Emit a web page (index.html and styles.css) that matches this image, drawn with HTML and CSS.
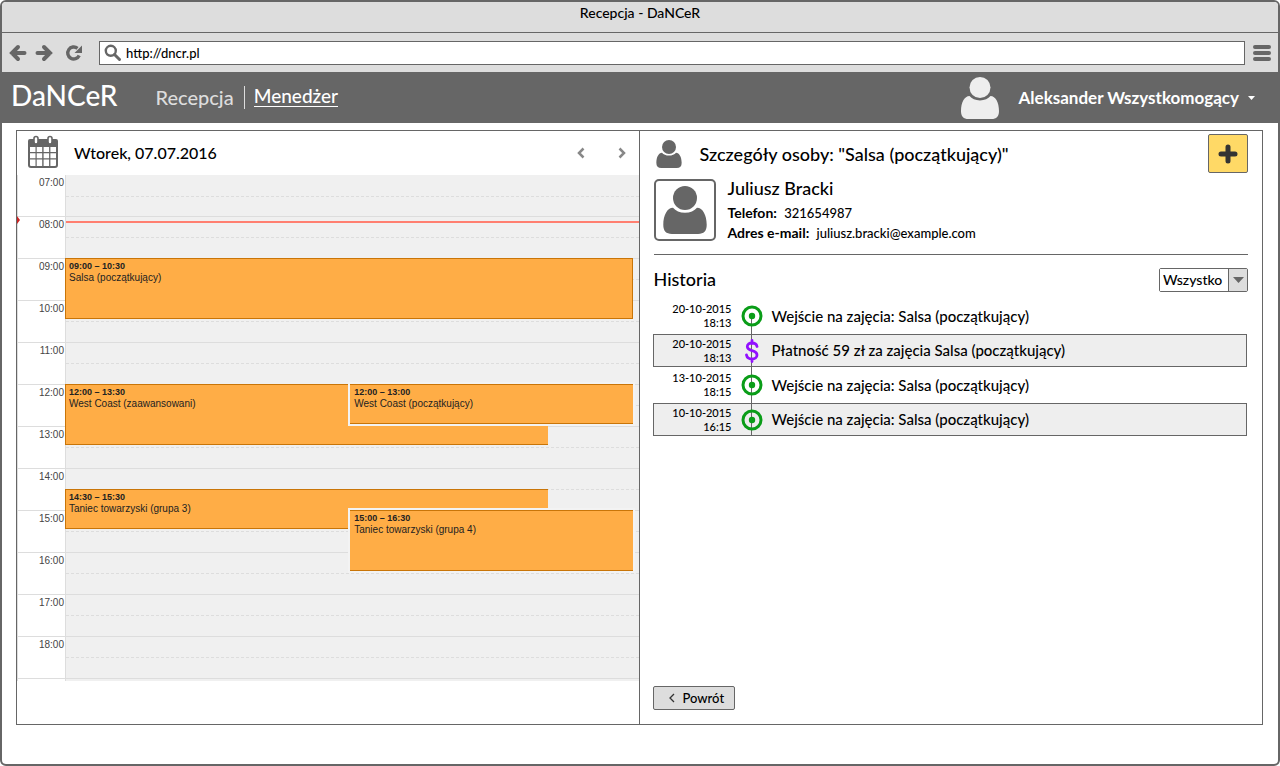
FILE: index.html
```html
<!DOCTYPE html>
<html lang="pl">
<head>
<meta charset="utf-8">
<meta name="viewport" content="width=device-width, initial-scale=1">
<title>Recepcja - DaNCeR</title>
<link rel="stylesheet" href="styles.css">
</head>
<body>
<svg width="0" height="0" class="sprite" aria-hidden="true">
  <symbol id="person" viewBox="0 0 38 42">
    <circle cx="19" cy="10.500" r="10.500"/>
    <path d="M8.500 19c2.200 2.600 6 4.400 10.500 4.400S27.300 21.600 29.500 19c5 0 8.500 6.500 8.500 15 0 5.500-2.500 8-7.500 8h-23C2.500 42 0 39.500 0 34c0-8.500 3.500-15 8.500-15z"/>
  </symbol>
  <symbol id="target" viewBox="0 0 22 22">
    <circle cx="11" cy="11" r="9" fill="none" stroke="currentColor" stroke-width="3"/>
    <circle cx="11" cy="11" r="3.200"/>
  </symbol>
  <symbol id="dollar" viewBox="0 0 14 24">
    <path d="M12 7.500C11.500 5 9.700 4 7 4 4.300 4 2.300 5.300 2.300 7.600c0 5.400 9.700 2.600 9.700 8.400 0 2.500-2.200 4-5 4-3 0-5-1.300-5.500-4M7 1.500v3M7 20v2.500" fill="none" stroke="currentColor" stroke-width="2.800" stroke-linecap="round"/>
  </symbol>
</svg>
<div class="window">
  <div class="titlebar">Recepcja - DaNCeR</div>
  <div class="toolbar">
    <button class="tool" aria-label="Wstecz"><svg width="18" height="18" viewBox="0 0 18 18"><path d="M9 3L3 9l6 6M3 9h12.500" class="thick"/></svg></button>
    <button class="tool" aria-label="Dalej"><svg width="18" height="18" viewBox="0 0 18 18"><path d="M9 3l6 6-6 6M15 9H2.500" class="thick"/></svg></button>
    <button class="tool reload" aria-label="Odśwież"><svg width="18" height="18" viewBox="0 0 18 18"><path d="M14.200 11.500A6 6 0 1 1 12.500 4.300" fill="none" stroke="currentColor" stroke-width="3.400"/><path d="M17 1.500V9H9.500z"/></svg></button>
    <label class="address">
      <svg width="18" height="18" viewBox="0 0 18 18"><circle cx="6.800" cy="6.800" r="5" fill="none" stroke="currentColor" stroke-width="2.400"/><path d="M10.500 10.500l5 5" class="handle"/></svg>
      <input type="text" value="http://dncr.pl" aria-label="Adres">
    </label>
    <button class="tool" aria-label="Menu przeglądarki"><svg width="18" height="18" viewBox="0 0 18 18"><path d="M2 3h14M2 9h14M2 15h14" class="bars"/></svg></button>
  </div>
  <header class="appbar">
    <a class="brand" href="#">DaNCeR</a>
    <nav class="nav">
      <a href="#">Recepcja</a>
      <a href="#" class="active" aria-current="page"><span>Menedżer</span></a>
    </nav>
    <button class="user">
      <svg width="38" height="42"><use href="#person"/></svg>
      <span>Aleksander Wszystkomogący</span>
      <svg width="7" height="4" viewBox="0 0 7 4" class="caret"><path d="M0 0h7L3.500 4z"/></svg>
    </button>
  </header>
  <main class="content">
    <section class="calendar">
      <div class="cal-head">
        <svg class="cal-icon" width="32" height="34" viewBox="0 0 32 34">
          <path d="M3 4h26a2 2 0 0 1 2 2v24a3 3 0 0 1-3 3H4a3 3 0 0 1-3-3V6a2 2 0 0 1 2-2z"/>
          <path d="M3 12h5.500v5H3zM9.700 12h5.500v5H9.700zM16.600 12h5.500v5h-5.500zM23.400 12H29v5h-5.600zM3 18.300h5.500v5H3zM9.700 18.300h5.500v5H9.700zM16.600 18.300h5.500v5h-5.500zM23.400 18.300H29v5h-5.600zM3 24.600h5.500V31H4a1 1 0 0 1-1-1zM9.700 24.600h5.500V31H9.700zM16.600 24.600h5.500V31h-5.500zM23.400 24.600H29V30a1 1 0 0 1-1 1h-4.600z" fill="#fff"/>
          <rect x="7" y="1.500" width="4" height="7.500" rx="2" fill="#fff" stroke="#666" stroke-width="1.600"/>
          <rect x="21" y="1.500" width="4" height="7.500" rx="2" fill="#fff" stroke="#666" stroke-width="1.600"/>
        </svg>
        <h2>Wtorek, 07.07.2016</h2>
        <button class="step" aria-label="Poprzedni dzień"><svg width="10" height="12" viewBox="0 0 10 12"><path d="M7.500 1.500L3 6l4.500 4.500"/></svg></button>
        <button class="step" aria-label="Następny dzień"><svg width="10" height="12" viewBox="0 0 10 12"><path d="M2.500 1.500L7 6l-4.500 4.500"/></svg></button>
      </div>
      <div class="day">
        <div class="hour"><time>07:00</time><i></i></div>
        <div class="hour"><time>08:00</time><i></i></div>
        <div class="hour"><time>09:00</time><i></i></div>
        <div class="hour"><time>10:00</time><i></i></div>
        <div class="hour"><time>11:00</time><i></i></div>
        <div class="hour"><time>12:00</time><i></i></div>
        <div class="hour"><time>13:00</time><i></i></div>
        <div class="hour"><time>14:00</time><i></i></div>
        <div class="hour"><time>15:00</time><i></i></div>
        <div class="hour"><time>16:00</time><i></i></div>
        <div class="hour"><time>17:00</time><i></i></div>
        <div class="hour"><time>18:00</time><i></i></div>
        <div class="hour end"><time></time><i></i></div>
        <div class="now"></div>
        <div class="events">
          <article class="event full at-0900"><b>09:00 – 10:30</b><span>Salsa (początkujący)</span></article>
          <article class="event under at-1200"><b>12:00 – 13:30</b><span>West Coast (zaawansowani)</span></article>
          <article class="event over at-1200b"><b>12:00 – 13:00</b><span>West Coast (początkujący)</span></article>
          <article class="event under at-1430"><b>14:30 – 15:30</b><span>Taniec towarzyski (grupa 3)</span></article>
          <article class="event over at-1500"><b>15:00 – 16:30</b><span>Taniec towarzyski (grupa 4)</span></article>
        </div>
      </div>
    </section>
    <section class="details">
      <div class="det-head">
        <svg width="26" height="28"><use href="#person"/></svg>
        <h2>Szczegóły osoby: "Salsa (początkujący)"</h2>
        <button class="add" aria-label="Dodaj"><svg width="20" height="20" viewBox="0 0 20 20"><path d="M10 3v14M3 10h14"/></svg></button>
      </div>
      <div class="person">
        <div class="avatar"><svg width="44" height="48"><use href="#person"/></svg></div>
        <div class="facts">
          <h3>Juliusz Bracki</h3>
          <p><b>Telefon:</b> 321654987</p>
          <p><b>Adres e-mail:</b> juliusz.bracki@example.com</p>
        </div>
      </div>
      <div class="hist-head">
        <h3>Historia</h3>
        <div class="picker">
          <select aria-label="Filtr historii"><option>Wszystko</option></select>
          <span class="arrow"><svg width="11" height="6" viewBox="0 0 11 6"><path d="M0 0h11L5.500 6z"/></svg></span>
        </div>
      </div>
      <ul class="history">
        <li><time>20-10-2015<br>18:13</time><div class="mark"><svg width="22" height="22"><use href="#target"/></svg></div><p>Wejście na zajęcia: Salsa (początkujący)</p></li>
        <li class="boxed pay"><time>20-10-2015<br>18:13</time><div class="mark"><svg width="14" height="24"><use href="#dollar"/></svg></div><p>Płatność 59 zł za zajęcia Salsa (początkujący)</p></li>
        <li><time>13-10-2015<br>18:15</time><div class="mark"><svg width="22" height="22"><use href="#target"/></svg></div><p>Wejście na zajęcia: Salsa (początkujący)</p></li>
        <li class="boxed"><time>10-10-2015<br>16:15</time><div class="mark"><svg width="22" height="22"><use href="#target"/></svg></div><p>Wejście na zajęcia: Salsa (początkujący)</p></li>
      </ul>
      <button class="back"><svg width="6" height="10" viewBox="0 0 6 10"><path d="M5 1L1 5l4 4"/></svg>Powrót</button>
    </section>
  </main>
</div>
</body>
</html>
```

FILE: styles.css
```css
* { box-sizing: border-box; }
body {
  margin: 0;
  background: #fff;
  color: #000;
  font: 500 14px/20px Lato, "Open Sans", sans-serif;
}
h2, h3, p, ul { margin: 0; padding: 0; }
h2, h3 { font-weight: 500; }
svg { display: block; flex: none; fill: currentColor; }
button {
  display: flex;
  align-items: center;
  border: 0;
  padding: 0;
  background: none;
  color: inherit;
  font: inherit;
}
a { color: inherit; text-decoration: none; }
.sprite { position: absolute; }

/* Browser frame */
.window {
  display: flex;
  flex-direction: column;
  min-height: 100vh;
  border: 2px solid #666;
  border-radius: 6px;
  overflow: hidden;
}
.titlebar {
  height: 31px;
  padding-top: 1px;
  border-bottom: 1px solid #666;
  background: #ddd;
  text-align: center;
}
.toolbar {
  display: flex;
  align-items: center;
  gap: 8px;
  height: 39px;
  padding: 0 7px;
  background: #ddd;
  color: #666;
}
.thick { fill: none; stroke: currentColor; stroke-width: 4; stroke-linecap: round; }
.handle { stroke: currentColor; stroke-width: 3; stroke-linecap: round; }
.bars { stroke: currentColor; stroke-width: 4; stroke-linecap: round; }
.reload { margin: 0 8px 0 4px; }
.address {
  flex: 1;
  display: flex;
  align-items: center;
  gap: 4px;
  height: 24px;
  padding: 0 4px;
  border: 1px solid #666;
  background: #fff;
}
.address input {
  flex: 1;
  min-width: 0;
  border: 0;
  padding: 0;
  outline: 0;
  background: none;
  color: #000;
  font: inherit;
  font-size: 13px;
}

/* Application header */
.appbar {
  display: flex;
  align-items: center;
  height: 51px;
  padding: 0 23px 0 9px;
  background: #666;
  color: #fff;
}
.brand { font-size: 28px; line-height: 32px; padding-bottom: 6px; }
.nav { display: flex; margin-left: 38px; font-size: 20px; line-height: 22px; color: #ddd; }
.nav .active {
  margin-left: 10px;
  padding: 0 0 2px 9px;
  border-left: 1px solid #ddd;
  color: #fff;
  font-size: 19px;
}
.nav .active span { display: block; border-bottom: 1px solid #fff; line-height: 20px; }
.user { margin-left: auto; font-size: 17px; font-weight: 700; }
.user svg:first-child { color: #eee; margin-right: 20px; }
.caret { margin-left: 9px; }

/* Main panel */
.content {
  flex: 1;
  display: grid;
  grid-template-columns: 1fr 1fr;
  margin: 7px 15px 39px 14px;
  border: 1px solid #666;
}
.calendar { border-right: 1px solid #666; }
.cal-head { display: flex; align-items: center; height: 44px; padding: 0 7px 0 10px; }
.cal-icon { color: #666; margin-bottom: 2px; }
.cal-head h2 { flex: 1; margin-left: 15px; font-size: 16px; }
.step { padding: 5px; color: #888; }
.step + .step { margin-left: 21px; }
.step path { fill: none; stroke: currentColor; stroke-width: 2.500; }

.day { position: relative; font: 10px/12px "Liberation Sans", Arial, sans-serif; }
.hour {
  display: grid;
  grid-template-columns: 47px 1fr;
  height: 42px;
  border-top: 1px solid #ddd;
  border-left: 1px solid #ddd;
}
.hour:first-child { height: 41px; border-top: 0; }
.hour time { padding: 2px 1px 0 0; text-align: right; color: #444; }
.hour i {
  border-left: 1px solid #ddd;
  background: #f0f0f0;
  display: flex;
}
.hour i::after { content: ""; flex: 1; height: 21px; border-bottom: 1px dashed #ddd; }
.hour:nth-child(n) i::after { height: 21px; margin-top: -1px; }
.hour:first-child i::after { margin-top: 0; }
.hour.end { height: 3px; }
.hour.end i::after { display: none; }
.now {
  position: absolute;
  top: 46px;
  left: 49px;
  right: 0;
  height: 2px;
  background: #ff7f70;
}
.now::before {
  content: "";
  position: absolute;
  top: -5px;
  left: -49px;
  border: 4px solid transparent;
  border-left: 3px solid #c22;
  border-right: 0;
}
.events {
  position: absolute;
  inset: -1px 5px auto 48px;
  display: grid;
  grid-template-columns: 50fr 35fr 15fr;
  grid-template-rows: repeat(24, 21px);
}
.event {
  display: flex;
  flex-direction: column;
  margin-bottom: 2px;
  padding: 1px 3px;
  border: 1px solid #c97508;
  background: #ffad46;
  color: #222;
  overflow: hidden;
}
.event b { font-size: 9px; }
.full { grid-column: 1 / 4; }
.under { grid-column: 1 / 3; border-right: 0; }
.over {
  grid-column: 2 / 4;
  margin-left: 1px;
  border-left: 0;
  border-right: 0;
  padding-left: 4px;
  box-shadow: 0 0 0 2px #f3f3f3;
}
.at-0900 { grid-row: 5 / 8; }
.at-1200 { grid-row: 11 / 14; }
.at-1200b { grid-row: 11 / 13; }
.at-1430 { grid-row: 16 / 18; }
.at-1500 { grid-row: 17 / 20; }

/* Person details */
.details { display: flex; flex-direction: column; padding: 3px 14px 14px 13px; }
.det-head { display: flex; align-items: center; padding-left: 3px; color: #666; }
.det-head h2 { flex: 1; margin-left: 18px; font-size: 18px; color: #000; }
.add {
  justify-content: center;
  width: 40px;
  height: 39px;
  border: 1px solid #666;
  border-radius: 2px;
  background: #ffd966;
}
.add path { stroke: #333; stroke-width: 5; stroke-linecap: round; }
.person {
  display: flex;
  gap: 12px;
  margin: 6px 0 0 1px;
  padding-bottom: 11px;
  border-bottom: 1px solid #666;
}
.avatar {
  display: grid;
  place-items: center;
  width: 62px;
  height: 62px;
  border: 2px solid #666;
  border-radius: 5px;
  color: #666;
}
.facts { font-size: 13px; }
.facts h3 { font-size: 18px; line-height: 18px; padding-bottom: 6px; }
.facts b { margin-right: 4px; font-size: 14px; }
.hist-head {
  display: flex;
  align-items: center;
  justify-content: space-between;
  margin: 13px 0 6px 1px;
}
.hist-head h3 { font-size: 18px; padding-bottom: 2px; }
.picker { display: flex; height: 24px; border: 1px solid #666; border-radius: 2px; }
.picker select {
  appearance: none;
  width: 68px;
  border: 0;
  padding: 0 0 1px 3px;
  background: #fff;
  color: #000;
  font: inherit;
}
.arrow {
  display: grid;
  place-items: center;
  width: 19px;
  border-left: 1px solid #666;
  background: #ddd;
  color: #666;
}
.history { list-style: none; margin-right: 1px; font-size: 15px; }
.history li {
  display: grid;
  grid-template-columns: 78px 40px 1fr;
  align-items: center;
  height: 36px;
  border: 0 solid transparent;
  border-width: 0 1px;
}
.history .boxed { height: 33px; border: 1px solid #666; background: #eee; }
.history time { font-size: 11px; line-height: 14px; text-align: right; }
.history p { padding-bottom: 1px; }
.mark {
  display: grid;
  place-items: center;
  height: 100%;
  color: #0a9d18;
  background: linear-gradient(#666, #666) center / 1px 100% no-repeat;
}
.history li:first-child .mark { background-size: 1px 50%; background-position: center bottom; }
.pay .mark { color: #9210ff; }
.back {
  gap: 8px;
  align-self: flex-start;
  width: 82px;
  height: 24px;
  margin-top: auto;
  padding: 0 0 1px 15px;
  border: 1px solid #666;
  border-radius: 2px;
  background: #ddd;
  font-size: 13px;
}
.back path { fill: none; stroke: #333; stroke-width: 1.300; }
```
